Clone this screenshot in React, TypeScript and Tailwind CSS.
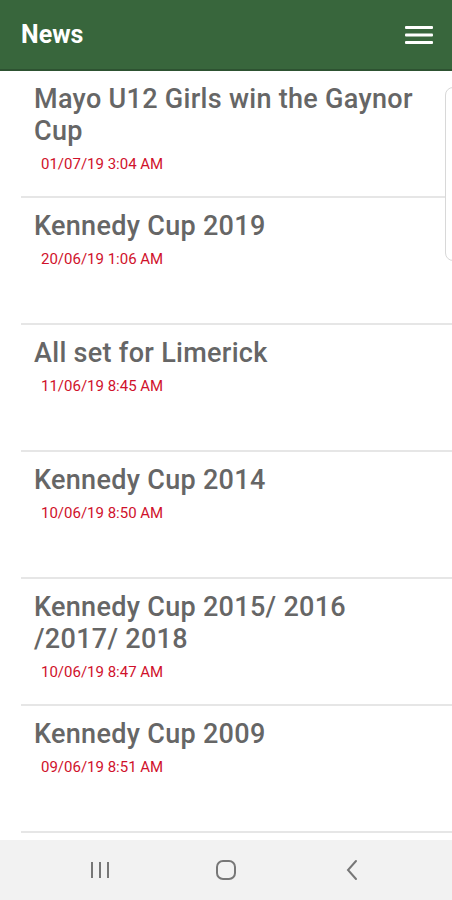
import React from 'react';

const items = [
  { title: 'Mayo U12 Girls win the Gaynor Cup', date: '01/07/19 3:04 AM' },
  { title: 'Kennedy Cup 2019', date: '20/06/19 1:06 AM' },
  { title: 'All set for Limerick', date: '11/06/19 8:45 AM' },
  { title: 'Kennedy Cup 2014', date: '10/06/19 8:50 AM' },
  { title: 'Kennedy Cup 2015/ 2016 /2017/ 2018', date: '10/06/19 8:47 AM' },
  { title: 'Kennedy Cup 2009', date: '09/06/19 8:51 AM' },
];

export default function App() {
  return (
    <div className="relative w-[452px] h-[900px] bg-white overflow-hidden flex flex-col font-['Roboto',sans-serif]">
      <header className="h-[71px] shrink-0 bg-[#38663c] border-b-2 border-[#2d5231] flex items-center justify-between pl-[21px] pr-[19px]">
        <h1 className="text-white text-[25px] font-bold">News</h1>
        <svg width="28" height="20" viewBox="0 0 28 20">
          <rect x="0" y="1" width="28" height="3" rx="1" fill="#fff" />
          <rect x="0" y="8.5" width="28" height="3" rx="1" fill="#fff" />
          <rect x="0" y="16" width="28" height="3" rx="1" fill="#fff" />
        </svg>
      </header>

      <main className="flex-1 overflow-hidden">
        {items.map((item, i) => (
          <div key={i} className="ml-[21px] h-[127px] border-b-2 border-[#e6e6e6] pt-[12px] pl-[13px] pr-[30px]">
            <h2 className="text-[#666666] text-[27px] leading-[32px] font-medium tracking-[0.3px]">{item.title}</h2>
            <p className="text-[#d0112b] text-[15px] leading-[18px] mt-[8px] pl-[7px]">{item.date}</p>
          </div>
        ))}
      </main>

      {/* edge of a card peeking in on the right */}
      <div className="absolute left-[445px] top-[87px] w-[20px] h-[174px] rounded-[8px] border border-[#d8d8d8] bg-white" />

      <nav className="absolute bottom-0 left-0 right-0 h-[60px] bg-[#f2f2f2] flex items-center justify-center">
        <div className="w-[126px] flex justify-center">
          <svg width="20" height="18" viewBox="0 0 20 18">
            <rect x="1" y="1" width="2" height="16" fill="#777" />
            <rect x="9" y="1" width="2" height="16" fill="#777" />
            <rect x="17" y="1" width="2" height="16" fill="#777" />
          </svg>
        </div>
        <div className="w-[126px] flex justify-center">
          <svg width="22" height="22" viewBox="0 0 22 22">
            <rect x="2" y="2" width="18" height="18" rx="6" fill="none" stroke="#777" strokeWidth="2" />
          </svg>
        </div>
        <div className="w-[126px] flex justify-center">
          <svg width="14" height="22" viewBox="0 0 14 22">
            <path d="M11 2 L3 11 L11 20" fill="none" stroke="#777" strokeWidth="2" strokeLinecap="round" />
          </svg>
        </div>
      </nav>
    </div>
  );
}
